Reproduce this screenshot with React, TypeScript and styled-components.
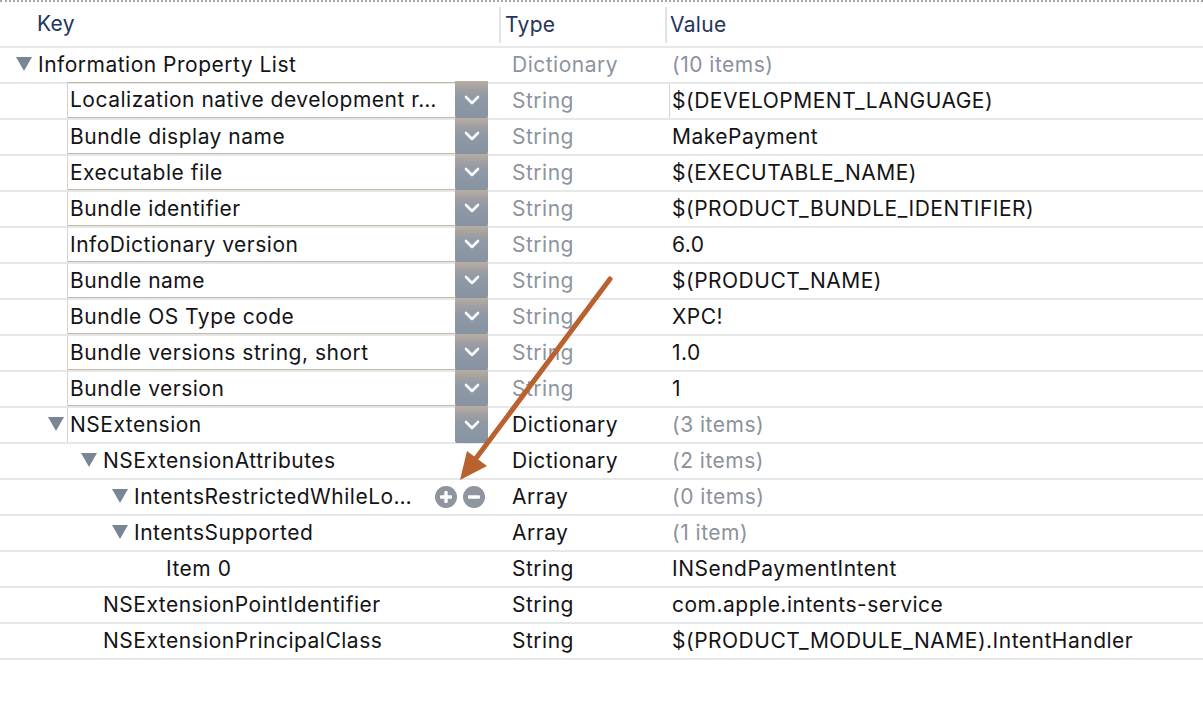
import React from "react";
import styled, { createGlobalStyle } from "styled-components";

const GlobalStyle = createGlobalStyle`
  html, body { margin: 0; padding: 0; background: #ffffff; }
  body { font-family: Inter, "Liberation Sans", Arial, sans-serif; -webkit-font-smoothing: antialiased; }
`;

const Page = styled.div`
  position: relative;
  width: 1203px;
  height: 707px;
  overflow: hidden;
  background: #fff;
  border-top: 2px dotted #a8a8a8;
  box-sizing: border-box;
`;

const Grid = styled.div`
  display: grid;
  grid-template-columns: 499px 166px 1fr;
`;

const Header = styled(Grid)`
  height: 44px;
  border-bottom: 2px solid #e6e8e9;
`;

const HeaderCell = styled.div<{ $sep?: boolean; $pad: number }>`
  display: flex;
  align-items: center;
  padding-left: ${(p) => p.$pad}px;
  padding-bottom: 2px;
  font-size: 21px;
  letter-spacing: 0.3px;
  color: #24345a;
  border-left: ${(p) => (p.$sep ? "2px solid #e3e3e3" : "none")};
  margin: ${(p) => (p.$sep ? "5px 0 3px" : "0")};
`;

const Row = styled(Grid)`
  height: 34px;
  border-bottom: 2px solid #e5e8e9;
  font-size: 21px;
  letter-spacing: 0.5px;
`;

const KeyCell = styled.div<{ $indent: number }>`
  display: flex;
  align-items: stretch;
  padding-left: ${(p) => p.$indent}px;
  min-width: 0;
`;

const Disclosure = styled.div<{ $w: number }>`
  width: ${(p) => p.$w}px;
  flex: none;
  display: flex;
  align-items: center;
  padding-bottom: 2px;
  &::before {
    content: "";
    display: block;
    width: 0;
    height: 0;
    border-left: 8px solid transparent;
    border-right: 8px solid transparent;
    border-top: 14px solid #7b8694;
  }
`;

const Spacer = styled.div<{ $w: number }>`
  width: ${(p) => p.$w}px;
  flex: none;
`;

const KeyText = styled.div`
  display: flex;
  align-items: center;
  padding-bottom: 2px;
  color: #141416;
  white-space: nowrap;
  overflow: hidden;
`;

const KeyField = styled.div<{ $top?: boolean; $bottom?: boolean }>`
  flex: 1;
  display: flex;
  align-items: stretch;
  margin-right: 11px;
  margin-top: ${(p) => (p.$top ? "-2px" : "0")};
  border-left: 1px solid #d9d2ca;
  border-top: ${(p) => (p.$top ? "1px solid #c6b6a4" : "none")};
  border-bottom: ${(p) => (p.$bottom ? "1px solid #c6b6a4" : "none")};
  min-width: 0;
`;

const FieldText = styled.div`
  flex: 1;
  display: flex;
  align-items: center;
  padding-left: 2px;
  padding-bottom: 1px;
  color: #141416;
  white-space: nowrap;
  overflow: hidden;
`;

const ChevronButton = styled.div`
  flex: none;
  width: 33px;
  margin: -2px 0 -1px;
  border-radius: 0 0 2px 2px;
  background: linear-gradient(180deg, #b7aea4 0%, #a19fa0 22%, #8f99a6 45%, #8893a2 100%);
  display: flex;
  align-items: center;
  justify-content: center;
`;

const RowButtons = styled.div`
  margin-left: auto;
  margin-right: 14px;
  display: flex;
  align-items: center;
  gap: 6px;
`;

const TypeCell = styled.div<{ $muted?: boolean }>`
  display: flex;
  align-items: center;
  padding-left: 13px;
  padding-bottom: 2px;
  color: ${(p) => (p.$muted ? "#8c949e" : "#141416")};
`;

const ValueCell = styled.div<{ $muted?: boolean }>`
  display: flex;
  align-items: stretch;
  padding-left: 7px;
  color: ${(p) => (p.$muted ? "#8b929c" : "#141416")};
  white-space: nowrap;
  overflow: hidden;
`;

const ValueText = styled.div`
  display: flex;
  align-items: center;
  padding-bottom: 2px;
`;

const ValueField = styled.div`
  flex: 1;
  display: flex;
  align-items: center;
  margin-left: -3px;
  margin-top: -2px;
  padding-left: 2px;
  border-left: 1px solid #d9d2ca;
  border-top: 1px solid #c6b6a4;
`;

const Overlay = styled.svg`
  position: absolute;
  left: 0;
  top: 0;
  pointer-events: none;
`;

type RowData = {
  key: string;
  level: number;
  disc?: boolean;
  field?: boolean;
  fieldTop?: boolean;
  fieldBottom?: boolean;
  type: string;
  typeMuted?: boolean;
  value: string;
  valueMuted?: boolean;
  valueField?: boolean;
  buttons?: boolean;
};

const indents = [16, 48, 81, 112, 144];

const rows: RowData[] = [
  { key: "Information Property List", level: 0, disc: true, type: "Dictionary", typeMuted: true, value: "(10 items)", valueMuted: true },
  { key: "Localization native development r…", level: 1, field: true, fieldTop: true, fieldBottom: true, type: "String", typeMuted: true, value: "$(DEVELOPMENT_LANGUAGE)", valueField: true },
  { key: "Bundle display name", level: 1, field: true, fieldBottom: true, type: "String", typeMuted: true, value: "MakePayment" },
  { key: "Executable file", level: 1, field: true, fieldBottom: true, type: "String", typeMuted: true, value: "$(EXECUTABLE_NAME)" },
  { key: "Bundle identifier", level: 1, field: true, fieldBottom: true, type: "String", typeMuted: true, value: "$(PRODUCT_BUNDLE_IDENTIFIER)" },
  { key: "InfoDictionary version", level: 1, field: true, fieldBottom: true, type: "String", typeMuted: true, value: "6.0" },
  { key: "Bundle name", level: 1, field: true, fieldBottom: true, type: "String", typeMuted: true, value: "$(PRODUCT_NAME)" },
  { key: "Bundle OS Type code", level: 1, field: true, fieldBottom: true, type: "String", typeMuted: true, value: "XPC!" },
  { key: "Bundle versions string, short", level: 1, field: true, fieldBottom: true, type: "String", typeMuted: true, value: "1.0" },
  { key: "Bundle version", level: 1, field: true, fieldBottom: true, type: "String", typeMuted: true, value: "1" },
  { key: "NSExtension", level: 1, disc: true, field: true, type: "Dictionary", value: "(3 items)", valueMuted: true },
  { key: "NSExtensionAttributes", level: 2, disc: true, type: "Dictionary", value: "(2 items)", valueMuted: true },
  { key: "IntentsRestrictedWhileLo…", level: 3, disc: true, buttons: true, type: "Array", value: "(0 items)", valueMuted: true },
  { key: "IntentsSupported", level: 3, disc: true, type: "Array", value: "(1 item)", valueMuted: true },
  { key: "Item 0", level: 4, type: "String", value: "INSendPaymentIntent" },
  { key: "NSExtensionPointIdentifier", level: 2, type: "String", value: "com.apple.intents-service" },
  { key: "NSExtensionPrincipalClass", level: 2, type: "String", value: "$(PRODUCT_MODULE_NAME).IntentHandler" },
];

const Chevron = () => (
  <svg width="16" height="10" viewBox="0 0 16 10">
    <path d="M2 2 L8 8 L14 2" fill="none" stroke="#ffffff" strokeWidth="2.6" strokeLinecap="round" strokeLinejoin="round" />
  </svg>
);

const RoundIcon = ({ plus }: { plus?: boolean }) => (
  <svg width="22" height="22" viewBox="0 0 22 22">
    <circle cx="11" cy="11" r="11" fill="#8e959e" />
    <rect x="5" y="9.3" width="12" height="3.4" rx="1" fill="#ffffff" />
    {plus && <rect x="9.3" y="5" width="3.4" height="12" rx="1" fill="#ffffff" />}
  </svg>
);

const PlistRow = ({ r }: { r: RowData }) => {
  const discW = r.field ? 19 : 22;
  return (
    <Row>
      <KeyCell $indent={indents[r.level]}>
        {r.disc ? <Disclosure $w={discW} /> : <Spacer $w={discW} />}
        {r.field ? (
          <KeyField $top={r.fieldTop} $bottom={r.fieldBottom}>
            <FieldText>{r.key}</FieldText>
            <ChevronButton>
              <Chevron />
            </ChevronButton>
          </KeyField>
        ) : (
          <KeyText>{r.key}</KeyText>
        )}
        {r.buttons && (
          <RowButtons>
            <RoundIcon plus />
            <RoundIcon />
          </RowButtons>
        )}
      </KeyCell>
      <TypeCell $muted={r.typeMuted}>{r.type}</TypeCell>
      <ValueCell $muted={r.valueMuted}>
        {r.valueField ? <ValueField>{r.value}</ValueField> : <ValueText>{r.value}</ValueText>}
      </ValueCell>
    </Row>
  );
};

export default function App() {
  return (
    <>
      <GlobalStyle />
      <Page>
        <Header>
          <HeaderCell $pad={37}>Key</HeaderCell>
          <HeaderCell $sep $pad={4}>Type</HeaderCell>
          <HeaderCell $sep $pad={3}>Value</HeaderCell>
        </Header>
        {rows.map((r, i) => (
          <PlistRow key={i} r={r} />
        ))}
        <Overlay width="1203" height="707" viewBox="0 0 1203 707">
          <line x1="610" y1="277" x2="474" y2="459" stroke="#b9612f" strokeWidth="5" strokeLinecap="round" />
          <polygon points="460,478 487,464 467,449" fill="#b9612f" />
        </Overlay>
      </Page>
    </>
  );
}
